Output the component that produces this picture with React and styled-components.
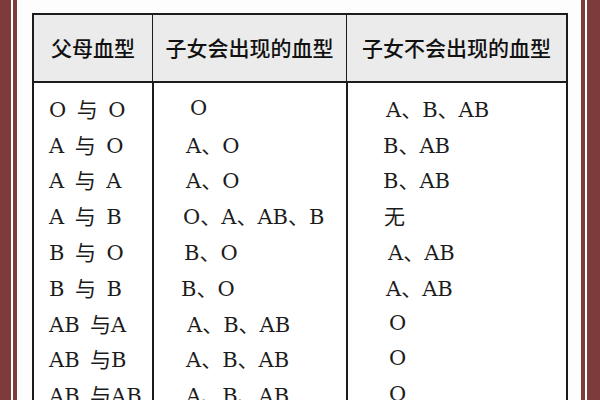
import React from 'react';
import styled, {createGlobalStyle} from 'styled-components';

const MAROON = '#7e3b3b';
const INK = '#1c1c1c';

const Global = createGlobalStyle`
    html, body {
        margin: 0;
        padding: 0;
        overflow: hidden;
        background: #fff;
    }
`

const Frame = styled.div`
    height: 400px;
    border-left: 11px solid ${MAROON};
    border-right: 13px solid ${MAROON};
    box-sizing: border-box;
`

const Inner = styled.div`
    height: 100%;
    margin: 0 2px;
    border-left: 4px solid ${MAROON};
    border-right: 4px solid ${MAROON};
    padding: 13px 13px 0 15px;
    box-sizing: border-box;
    background: #fdfdfd;
`

const Table = styled.div`
    border: 2px solid ${INK};
    border-bottom: none;
    background: #fff;
`

const Row = styled.div`
    display: grid;
    grid-template-columns: 118px 194px 1fr;
`

const HeadRow = styled(Row)`
    height: 66px;
    background: #ebebeb;
    border-bottom: 2px solid ${INK};
`

const HeadCell = styled.div`
    display: flex;
    align-items: center;
    justify-content: center;
    font-family: "Noto Sans CJK SC", sans-serif;
    font-size: 21px;
    font-weight: 500;
    color: #111;
    padding-bottom: 2px;
    border-left: ${p => (p.first ? 'none' : `1.5px solid ${INK}`)};
`

const Body = styled.div`
    padding-top: 7px;
    display: grid;
    grid-template-columns: 118px 194px 1fr;
    position: relative;
`

const Cell = styled.div`
    height: 35.8px;
    display: flex;
    align-items: center;
    padding-left: ${p => p.pad}px;
    font-family: "DejaVu Serif", "Noto Sans CJK SC", serif;
    font-size: 21px;
    color: ${INK};
    white-space: pre;
`

const Divider = styled.div`
    position: absolute;
    top: 0;
    bottom: 0;
    left: ${p => p.at}px;
    width: 1.5px;
    background: ${INK};
`

const rows = [
    ['O\u2002与\u2002O', 'O', 'A、B、AB', 0, 4, 0],
    ['A\u2002与\u2002O', 'A、O', 'B、AB', 0, 0, -3],
    ['A\u2002与\u2002A', 'A、O', 'B、AB', 0, 0, -3],
    ['A\u2002与\u2002B', 'O、A、AB、B', '无', 0, -3, -2],
    ['B\u2002与\u2002O', 'B、O', 'A、AB', 0, -2, 2],
    ['B\u2002与\u2002B', 'B、O', 'A、AB', 0, -5, 0],
    ['AB\u2002与A', 'A、B、AB', 'O', 0, 1, 3],
    ['AB\u2002与B', 'A、B、AB', 'O', 0, 0, 3],
    ['AB\u2002与AB', 'A、B、AB', 'O', 0, 0, 3],
];

const App = () => {
    return (
        <Frame>
            <Global />
            <Inner>
                <Table>
                    <HeadRow>
                        <HeadCell first>父母血型</HeadCell>
                        <HeadCell>子女会出现的血型</HeadCell>
                        <HeadCell>子女不会出现的血型</HeadCell>
                    </HeadRow>
                    <Body>
                        <Divider at={118} />
                        <Divider at={312} />
                        {rows.map(([a, b, c, oa, ob, oc], i) => (
                            <React.Fragment key={i}>
                                <Cell pad={15 + oa}>{a}</Cell>
                                <Cell pad={34 + ob}>{b}</Cell>
                                <Cell pad={40 + oc}>{c}</Cell>
                            </React.Fragment>
                        ))}
                    </Body>
                </Table>
            </Inner>
        </Frame>
    );
}

export default App;
